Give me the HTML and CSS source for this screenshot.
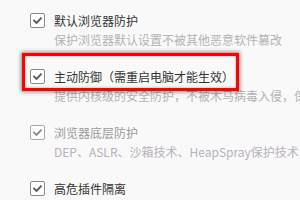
FILE: index.html
```html
<!DOCTYPE html>
<html lang="zh">
<head>
<meta charset="utf-8">
<link rel="stylesheet" href="styles.css">
</head>
<body>
<div class="list">
  <div class="item">
    <div class="row">
      <span class="check"><svg viewBox="0 0 15 15" width="15" height="15"><path d="M3.5 7.6 L6.3 10.3 L11.5 4.8" /></svg></span>
      <span class="title">默认浏览器防护</span>
    </div>
    <div class="desc">保护浏览器默认设置不被其他恶意软件篡改</div>
  </div>
  <div class="item highlighted">
    <div class="row">
      <span class="check"><svg viewBox="0 0 15 15" width="15" height="15"><path d="M3.5 7.6 L6.3 10.3 L11.5 4.8" /></svg></span>
      <span class="title">主动防御（需重启电脑才能生效）</span>
    </div>
    <div class="desc">提供内核级的安全防护，不被木马病毒入侵，保护系统安全</div>
    <div class="mark"></div>
  </div>
  <div class="item disabled">
    <div class="row">
      <span class="check"><svg viewBox="0 0 15 15" width="15" height="15"><path d="M3.5 7.6 L6.3 10.3 L11.5 4.8" /></svg></span>
      <span class="title">浏览器底层防护</span>
    </div>
    <div class="desc">DEP、ASLR、沙箱技术、HeapSpray保护技术，全面防护</div>
  </div>
  <div class="item last">
    <div class="row">
      <span class="check"><svg viewBox="0 0 15 15" width="15" height="15"><path d="M3.5 7.6 L6.3 10.3 L11.5 4.8" /></svg></span>
      <span class="title">高危插件隔离</span>
    </div>
  </div>
</div>
</body>
</html>
```

FILE: styles.css
```css
html, body {
  margin: 0;
  padding: 0;
  background: #f9f9f9;
  width: 300px;
  height: 200px;
  overflow: hidden;
}
body {
  font-family: "Noto Sans CJK SC", "Noto Sans", sans-serif;
  font-size: 12px;
}
.list {
  padding: 12px 0 0 30px;
  display: flex;
  flex-direction: column;
}
.item {
  position: relative;
  height: 56px;
  white-space: nowrap;
}
.item.last {
  height: auto;
}
.row {
  display: flex;
  align-items: center;
  gap: 9px;
  height: 17px;
}
.check {
  width: 13px;
  height: 13px;
  border: 1px solid #8a8a8a;
  border-radius: 2px;
  background: #fdfdfd;
  display: flex;
  align-items: center;
  justify-content: center;
  flex: none;
}
.check svg {
  display: block;
}
.check path {
  fill: none;
  stroke: #555;
  stroke-width: 2;
  stroke-linecap: square;
}
.title {
  color: #333;
  line-height: 17px;
}
.desc {
  margin-top: 3px;
  margin-left: 24px;
  color: #b3b3b3;
  line-height: 16px;
}
.disabled .title {
  color: #9a9a9a;
}
.disabled .check {
  border-color: #aaa;
}
.disabled .check path {
  stroke: #888;
}
.disabled .desc {
  color: #b8b0bc;
}
.mark {
  position: absolute;
  left: -8px;
  top: -15px;
  width: 211px;
  height: 32px;
  border: 3px solid #ff0000;
  box-shadow: 0 0 4px 1px rgba(0, 0, 0, 0.45), inset 0 0 3px rgba(0, 0, 0, 0.35);
}
```
